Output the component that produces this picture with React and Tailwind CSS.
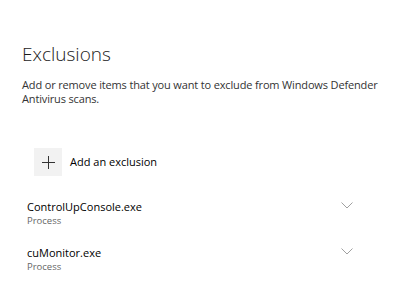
import React from 'react';

const exclusions = [
    { name: 'ControlUpConsole.exe', type: 'Process' },
    { name: 'cuMonitor.exe', type: 'Process' },
];

const Chevron = () => (
    <svg width="12" height="7" viewBox="0 0 12 7" fill="none" className="text-[#a0a0a0]">
        <path d="M0.5 0.5L6 6L11.5 0.5" stroke="currentColor" strokeWidth="1" />
    </svg>
);

const App = () => {
    return (
        <div className="w-[401px] h-[300px] bg-white text-black font-['Open_Sans',sans-serif] overflow-hidden">
            <div className="pl-[22px] pt-[40px]">
                <h1 className="text-[19px] leading-[28px] font-light text-[#1a1a1a]">Exclusions</h1>
                <p className="mt-[10px] w-[360px] text-[11px] leading-[14px] tracking-[-0.15px] text-[#333]">
                    Add or remove items that you want to exclude from Windows Defender Antivirus scans.
                </p>
            </div>

            <button className="ml-[34px] mt-[42px] flex items-center gap-[8px]">
                <span className="w-[28px] h-[28px] bg-[#f2f2f2] flex items-center justify-center">
                    <svg width="13" height="13" viewBox="0 0 13 13">
                        <path d="M6.5 0V13M0 6.5H13" stroke="#333" strokeWidth="1" />
                    </svg>
                </span>
                <span className="text-[11px] text-black">Add an exclusion</span>
            </button>

            <div className="mt-[24px] flex flex-col gap-[19px]">
                {exclusions.map((item) => (
                    <div key={item.name} className="flex items-start pl-[27px] pr-[48px]">
                        <div className="flex-1">
                            <div className="text-[11px] leading-[14px] text-black">{item.name}</div>
                            <div className="text-[9.5px] leading-[13px] text-[#666]">{item.type}</div>
                        </div>
                        <div className="pt-[2px]">
                            <Chevron />
                        </div>
                    </div>
                ))}
            </div>
        </div>
    );
};

export default App;
